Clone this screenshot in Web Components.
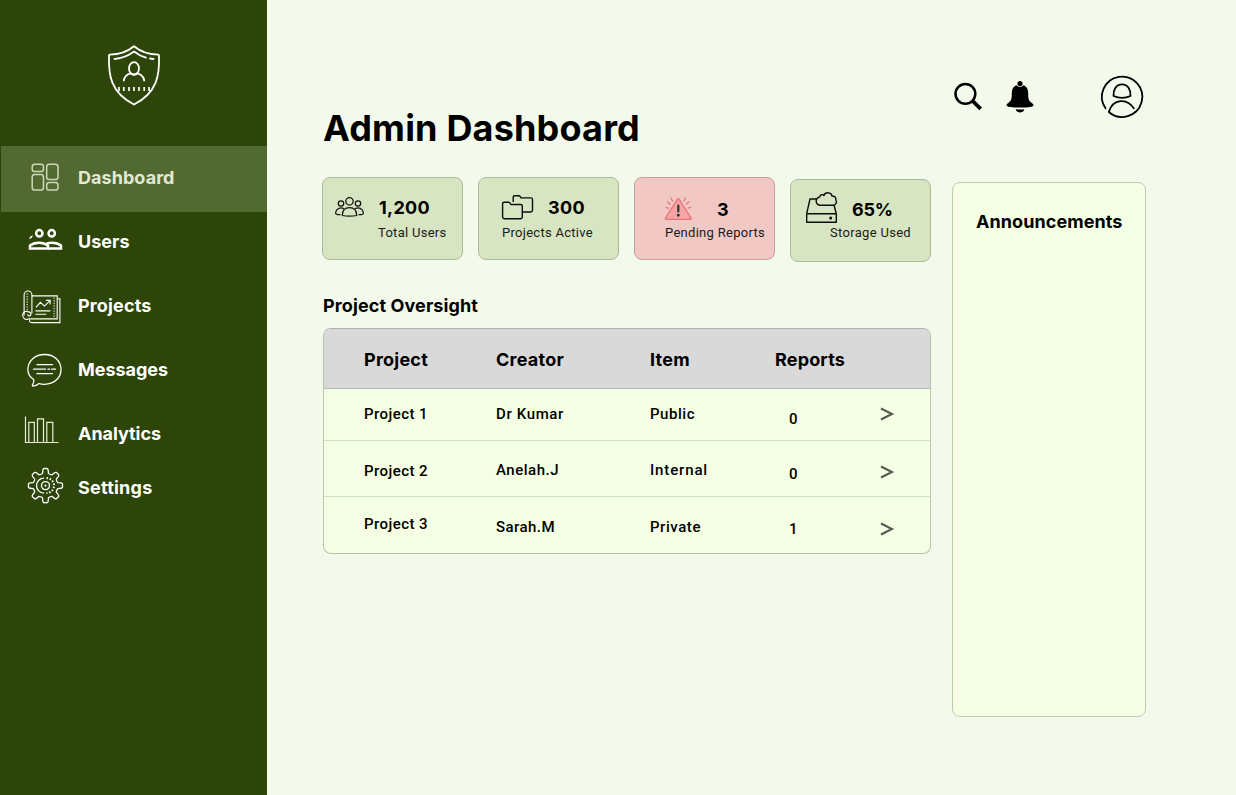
<!DOCTYPE html>
<html lang="en">
<head>
<meta charset="utf-8">
<title>Admin Dashboard</title>
<style>
html,body{margin:0;height:100%}
body{background:#f4faeb;font-family:Inter,"Liberation Sans",sans-serif;color:#000;overflow:hidden}
</style>
</head>
<body>
<admin-app></admin-app>
<script>
const define=(name,html,after)=>{
  customElements.define(name,class extends HTMLElement{
    connectedCallback(){
      if(this.shadowRoot)return;
      const root=this.attachShadow({mode:'open'});
      const t=document.createElement('template');
      t.innerHTML=typeof html==='function'?html(this):html;
      root.append(t.content.cloneNode(true));
      if(after)after(this,root);
    }
  });
};

/* A single line of text tracked to span a given width. */
define('fit-text',`<style>:host{display:block;white-space:nowrap;line-height:20px}span{display:inline-block}</style><span><slot></slot></span>`,(el,root)=>{
  const s=root.querySelector('span'),w=+el.getAttribute('w'),n=el.textContent.length;
  if(w&&n>1)s.style.letterSpacing=((w-s.getBoundingClientRect().width)/n).toFixed(3)+'px';
});

const icons={
shield:`<svg width="56" height="64" viewBox="106 43 56 64" fill="none" stroke="#fff" stroke-width="1.8" stroke-linecap="round" stroke-linejoin="round"><path d="M134 46.300c-6 5-14 8.200-24.200 8.400-.6 0-.8.400-.8 1 -.6 18.800 1.300 36.600 25 48.800 23.700-12.200 25.600-30 25-48.800 0-.6-.2-1-.8-1C148 54.500 140 51.300 134 46.300z"/><path d="M114.500 59q11-1 19.500-7.500 6 4.600 12 6.200M150 58.500l3.500.5"/><ellipse cx="134" cy="68.500" rx="5" ry="6.300"/><path d="M123.800 80.500c.6-4 2.900-6.300 7.200-7.200q3 2.500 6 0c4.300.9 6.600 3.200 7.200 7.200"/><path stroke-linecap="butt" d="M119 87v4M123.800 87v4M129 87v4M134 87v4M139 87v4M144.200 87v4M149 87v4" stroke-width="1.700"/></svg>`,
dashboard:`<svg width="77" height="64" viewBox="1 146 77 64" fill="none" stroke="#ccd6b9" stroke-width="1.500"><rect x="32.200" y="164.300" width="11.300" height="7.300" rx="2.600"/><rect x="46.700" y="164.300" width="11.300" height="15.200" rx="2.600"/><rect x="32.200" y="174.600" width="11.300" height="15.400" rx="2.600"/><rect x="46.700" y="182.400" width="11.300" height="7.600" rx="2.600"/></svg>`,
users:`<svg width="78" height="60" viewBox="0 212 78 60" fill="none" stroke="#fff" stroke-width="2.500"><circle cx="39.300" cy="233.300" r="3.200"/><circle cx="51.700" cy="233.300" r="3.200"/><path d="M29 239q.6-3 3.800-3.800-.2 3-3.800 3.800z" fill="#fff" stroke="none"/><path d="M30 248.600v-3q3.500-2.800 9-2.800t9 2.800v3z"/><path d="M48 248.600h13v-3q-3.500-2.800-9-2.800-3 0-5.500.8"/></svg>`,
projects:`<svg width="78" height="68" viewBox="-.4 271.600 78 68" fill="none" stroke="#fff" stroke-width="1.100"><path d="M23.700 315v-20.500a3.900 3.900 0 0 1 7.800 0V313"/><path d="M31.500 295.500H56.800V318.500H28"/><path d="M28 318.500a4 4 0 1 1 .3-7c2 .3 3.200 2.500 1.500 3.800-1.300.6-2.500-.2-2.400-1.500M29 319c0 2.500 1.500 3.200 3 3.200H59.500V298.400H57"/><path d="M26.800 293v19M53.700 297v21" stroke-dasharray="1.300 1.300" stroke-width="1"/><path d="M35.500 307l4.500-5 4 3.700 5.500-5.200M45.500 300h4.200v4"/><path d="M35 310.500h15M35 313.800h11"/></svg>`,
messages:`<svg width="78" height="60" viewBox="0 340 78 60" fill="none" stroke="#fff" stroke-width="1.300" stroke-linecap="round" stroke-linejoin="round"><path d="M33.700 379.500c-4-2.500-5.800-6-5.800-10 0-8.500 7.200-15 16.700-15s16.400 6.500 16.400 15-7 14.800-16.500 14.800c-2 0-3.700-.1-5.500-.8-1.500 1.400-3.500 2.600-6 2.600q-1.200-.4-.5-1.200 1.800-2.400 1.200-5.400z"/><path d="M37 364.700h15.500M33.500 369.200h12M48 369.200h1.500M51.500 369.200h4M37 373.700h15.500"/></svg>`,
analytics:`<svg width="78" height="68" viewBox="0 400 78 68" fill="none" stroke="#e8ecdf" stroke-width="1.200"><path d="M25.500 416.500v26h33"/><path d="M28.800 442v-19.700h5.500V442M37.500 442v-23.200h6V442M46.800 442v-19.700h6V442"/></svg>`,
settings:`<svg width="78" height="40" viewBox="0 468 78 40" fill="none" stroke="#fff" stroke-width="1.300" stroke-linejoin="round" overflow="visible"><path id="gear"/><path d="M44 478.100a7.500 7.500 0 1 0 0 15"/><path d="M46.500 478.100a7.500 7.500 0 0 1 0 15" stroke-dasharray="1.500 1.700" stroke-width="2"/><circle cx="45.500" cy="485.600" r="4"/><circle cx="45.500" cy="485.600" r=".8" fill="#fff" stroke-width=".5"/></svg>`,
people:`<svg viewBox="334 194 32 24" fill="none" stroke="#111" stroke-width="1.250"><circle cx="349.500" cy="201.300" r="3.700"/><circle cx="341" cy="203.500" r="2.700"/><circle cx="358" cy="203.500" r="2.700"/><path d="M342.300 215.500q0-8 7.200-8t7.200 8q-7.200 1.200-14.400 0zM340.500 214.500h-3q-2.300 0-1.800-2.300c.7-4 5-5.200 8.300-3.400M358.500 214.500h3q2.300 0 1.800-2.300c-.7-4-5-5.200-8.300-3.400"/></svg>`,
folders:`<svg viewBox="501 194 34 26" fill="none" stroke="#0c0c0c" stroke-width="1.400" stroke-linejoin="round"><path d="M502.600 216.500v-12.800q0-1.400 1.400-1.400h4.600q.8 0 1.200.6l1 1.600h9.800q1.700 0 1.700 1.700v10.800q0 1.700-1.700 1.700h-16.300q-1.700 0-1.700-1.700z"/><path d="M513.200 202v-5q0-1.300 1.300-1.300h4.400q.7 0 1.100.6l1 1.600h9.800q1.700 0 1.700 1.700v10.700q0 1.700-1.700 1.700h-8"/></svg>`,
warning:`<svg viewBox="664 194 30 28" fill="none" stroke="#e5767b" stroke-width="1.300" stroke-linecap="round" stroke-linejoin="round"><path d="M677.700 198.800q.6-.9 1.200 0l12.300 19.300q.3 1.300-1 1.300h-23.800q-1.300 0-1-1.300z" fill="#f8a3a4"/><path d="M678.300 205.500v6" stroke="#26343c" stroke-width="2.200"/><circle cx="678.300" cy="215.200" r=".8" fill="#26343c" stroke="#26343c"/><path d="M671 198l1.700 3M685.600 198l-1.700 3M667.600 202l2.600 2.200M689 202l-2.600 2.200M666 207.500l2.500.7M690.600 207.500l-2.500.7"/></svg>`,
drive:`<svg viewBox="804 190 36 34" fill="none" stroke="#0c0c0c" stroke-width="1.400" stroke-linejoin="round"><path d="M806.700 213.700H836.300V222.300H806.700zM806.700 213.700l3.300-14.700h6.500M834 205l2.300 8.700"/><path d="M820.500 205.200c-5 0-6.200-6.700-.8-8.200.2-2.700 3.300-2.900 4.200-1.500 1.400-4 7.500-3.300 8.200.5 2.900.1 4.300 1.800 3.700 4 1.500 2.400.2 5.200-2.800 5.200z"/><circle cx="830.700" cy="218" r=".8" fill="#000"/></svg>`,
search:`<svg width="30" height="30" viewBox="953 82 30 30" fill="none" stroke="#000"><circle cx="965.400" cy="93.800" r="9.900" stroke-width="2.500"/><path d="M972.500 101l2.200 2" stroke-width="2.500"/><path d="M974 102.300l5.300 5.300" stroke-width="3.800" stroke-linecap="square"/></svg>`,
bell:`<svg width="28" height="34" viewBox="1006 80 28 34"><circle cx="1020" cy="83.600" r="2.600"/><path d="M1016.700 85.300c-3.600 1.200-4.900 4-4.900 8.200 0 6-.6 7.500-4 9.700-1.400 1-1.700 1.900-.8 2.700 2.600 2.200 23.400 2.200 26 0 .9-.8.600-1.700-.8-2.700-3.400-2.200-4-3.700-4-9.700 0-4.200-1.300-7-4.900-8.200-1.500 2.300-5.100 2.300-6.600 0z"/><path d="M1015.800 109.200q4.200.4 8.400 0c-.5 4.300-7.900 4.300-8.400 0z"/></svg>`,
avatar:`<svg width="44" height="44" viewBox="1100 75 44 44" fill="none" stroke="#000" stroke-width="1.800" stroke-linecap="round" stroke-linejoin="round"><path d="M1105.500 108.300A20.200 20.200 0 1 1 1108.800 112C1113 98.300 1127 98 1133.800 108.200"/><path d="M1113.500 96c-.5-6 2.500-11.600 8.500-11.600s9 5.600 8.500 11.600q-8.500 3.600-17 0z"/></svg>`
};
define('ui-icon',el=>`<style>:host{display:block;flex:none}svg{display:block;overflow:visible}</style>${icons[el.getAttribute('name')]}`,(el,root)=>{
  const svg=root.querySelector('svg'),vb=svg.viewBox.baseVal;
  svg.setAttribute('width',vb.width);svg.setAttribute('height',vb.height);
  const gear=root.querySelector('#gear');
  if(gear){
    const p=(r,a)=>`${(45.500+r*Math.sin(a)).toFixed(2)} ${(485.600-r*Math.cos(a)).toFixed(2)}`;
    let d='';
    for(let i=0;i<8;i++){
      const a=i*Math.PI/4;
      d+=`${i?'L':'M'}${p(12.600,a-.24)}L${p(15.700,a-.17)}Q${p(17.900,a-.12)} ${p(16.900,a)}Q${p(17.900,a+.12)} ${p(15.700,a+.17)}L${p(12.600,a+.24)}Q${p(11.700,a+Math.PI/8)} ${p(12.600,a+Math.PI/4-.24)}`;
    }
    gear.setAttribute('d',d+'Z');
  }
});

define('nav-item',el=>`<style>
:host{display:flex;align-items:center;box-sizing:border-box;height:${el.getAttribute('h')}px;color:#fff;font-weight:700;font-size:18px}
:host([active]){background:#536932;color:#e2e9d5;margin-left:1px;padding-bottom:2px}
</style><ui-icon name="${el.getAttribute('icon')}"></ui-icon><fit-text w="${el.getAttribute('w')}">${el.getAttribute('label')}</fit-text>`);

define('side-bar',`<style>
:host{display:flex;flex-direction:column;flex:none;width:267px;background:#2d4509}
.logo{display:flex;justify-content:center;box-sizing:border-box;height:146px;padding-top:43px;padding-left:1px}
</style><div class="logo"><ui-icon name="shield"></ui-icon></div>
<nav><nav-item active h="66" icon="dashboard" label="Dashboard" w="96.500"></nav-item>
<nav-item h="60" icon="users" label="Users" w="51.500"></nav-item>
<nav-item h="68" icon="projects" label="Projects" w="73.500"></nav-item>
<nav-item h="60" icon="messages" label="Messages" w="90"></nav-item>
<nav-item h="68" icon="analytics" label="Analytics" w="83"></nav-item>
<nav-item h="40" icon="settings" label="Settings" w="74.500"></nav-item></nav>`);

define('stat-card',`<style>
:host{display:block;box-sizing:border-box;width:141px;height:83px;border:1px solid #adb99b;border-radius:8px;background:#d8e5c2}
:host([alert]){background:#f2c8c5;border-color:#c2a09e}
.top{display:flex;height:45px;padding-left:var(--ix)}
::slotted(ui-icon){margin-top:var(--iy)}
::slotted([slot=value]){margin-left:var(--gap);margin-top:var(--vy);font-weight:700;font-size:18px}
::slotted([slot=label]){margin-left:var(--lx);margin-top:var(--ly,0);font:400 13px/20px Roboto,"Noto Sans",sans-serif;color:#1a1a1a}
</style><div class="top"><slot name="icon"></slot><slot name="value"></slot></div><slot name="label"></slot>`);

define('data-table',el=>{
  const rows=[
    [51,['Project 1',64,15],['Dr Kumar',68,15],['Public',45,15],['0',0,20],15],
    [56,['Project 2',64,20],['Anelah.J',63,19],['Internal',58,19],['0',0,23],21],
    [57,['Project 3',64,17],['Sarah.M',59,20],['Private',51,20],['1',0,22],22]];
  return `<style>
:host{display:block;box-sizing:border-box;width:608px;height:226px;margin-left:1px;border:1px solid #b9c3ab;border-top-color:#b0b0ac;border-radius:8px;background:#f4ffe3;overflow:hidden}
.head,.row{display:grid;grid-template-columns:132px 154px 125px 105px 1fr;padding-left:40px;box-sizing:border-box}
.head{height:60px;background:#d9d9d9;border-bottom:1px solid #b7b7b7;font-weight:700;font-size:18px;padding-top:21px}
.row{font:500 15px/20px Roboto,"Noto Sans",sans-serif}
.row+.row{border-top:1px solid #d6e0c8}
.n{padding-left:14px}
svg{display:block}
</style><div class="head"><fit-text w="64">Project</fit-text><fit-text w="68">Creator</fit-text><fit-text w="40">Item</fit-text><fit-text w="70">Reports</fit-text></div>`+
  rows.map(r=>`<div class="row" style="height:${r[0]}px">${r.slice(1,5).map((c,i)=>`<fit-text class="${i==3?'n':''}" w="${c[1]}" style="margin-top:${c[2]}px">${c[0]}</fit-text>`).join('')}<svg style="margin-top:${r[5]+2}px" width="15" height="16" fill="none" stroke="#55584f" stroke-width="2"><path d="M1 2.500L12 8 1 13.500"/></svg></div>`).join('');
});

define('admin-app',`<style>
:host{display:flex;width:1236px;height:795px}
main{flex:1;padding-left:55px}
header{display:flex;height:177px;box-sizing:border-box}
h1{margin:0;width:631px;box-sizing:border-box;padding:118px 0 0 1px;font-size:36px;font-weight:700}
.search{margin-top:82px}.bell{margin:80px 66px 0 23px}.avatar{margin-top:75px}
.content{display:flex}
.left{width:609px;margin-right:21px}
.cards{display:flex;gap:15px;height:85px}
.cards stat-card:last-child{margin-top:2px}
h2{margin:0;font-size:18px;font-weight:700}
.left h2{height:32px;margin-top:34px;padding-left:1px}
aside{box-sizing:border-box;width:194px;height:535px;margin-top:5px;border:1px solid #c1c9b3;border-radius:8px;background:#f4ffe3;padding:29px 0 0 23px}
</style>
<side-bar></side-bar>
<main>
<header><h1><fit-text w="317">Admin Dashboard</fit-text></h1>
<ui-icon class="search" name="search"></ui-icon><ui-icon class="bell" name="bell"></ui-icon><ui-icon class="avatar" name="avatar"></ui-icon></header>
<div class="content">
<div class="left">
<div class="cards">
<stat-card style="--ix:11px;--iy:16px;--gap:13px;--vy:20px;--lx:55px"><ui-icon slot="icon" name="people"></ui-icon><fit-text slot="value" w="51">1,200</fit-text><fit-text slot="label" w="68.500">Total Users</fit-text></stat-card>
<stat-card style="--ix:22px;--iy:16px;--gap:13px;--vy:20px;--lx:23px"><ui-icon slot="icon" name="folders"></ui-icon><fit-text slot="value" w="37">300</fit-text><fit-text slot="label" w="91">Projects Active</fit-text></stat-card>
<stat-card alert style="--ix:29px;--iy:16px;--gap:23px;--vy:22px;--lx:30px"><ui-icon slot="icon" name="warning"></ui-icon><fit-text slot="value">3</fit-text><fit-text slot="label" w="100">Pending Reports</fit-text></stat-card>
<stat-card style="--ix:13px;--iy:10px;--gap:12px;--vy:20px;--lx:39px;--ly:-2px"><ui-icon slot="icon" name="drive"></ui-icon><fit-text slot="value" w="41">65%</fit-text><fit-text slot="label" w="81">Storage Used</fit-text></stat-card>
</div>
<h2><fit-text w="155">Project Oversight</fit-text></h2>
<data-table></data-table>
</div>
<aside><h2><fit-text w="146.500">Announcements</fit-text></h2></aside>
</div>
</main>`);
</script>
</body>
</html>
